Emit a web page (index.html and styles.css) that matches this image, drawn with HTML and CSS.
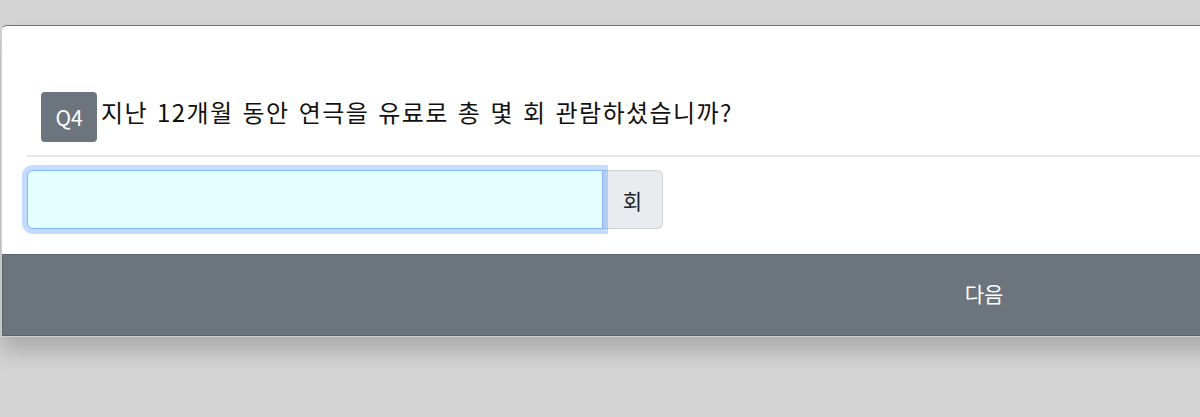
FILE: index.html
```html
<!DOCTYPE html>
<html lang="ko">
<head>
  <meta charset="UTF-8">
  <meta name="viewport" content="width=device-width, initial-scale=1.0">
  <title>설문</title>
  <link rel="stylesheet" href="styles.css">
</head>
<body>

  <div class="page">
    <div class="survey-card">
      <div class="card-body">
        <div class="question">
          <span class="q-badge">Q4</span>
          <span class="q-text">지난 12개월 동안 연극을 유료로 총 몇 회 관람하셨습니까?</span>
        </div>
        <hr class="divider">
        <div class="input-group">
          <input type="text" class="answer-input" id="answer">
          <span class="input-unit">회</span>
        </div>
      </div>
      <button class="next-btn">다음</button>
    </div>
  </div>

</body>
</html>
```

FILE: styles.css
```css
body {
  font-family: "Noto Sans CJK KR", "Noto Sans", sans-serif;
  background-color: #d4d4d4;
  margin: 0;
  padding: 0;
}
.page {
  overflow: hidden;
  padding: 25px 0 80px 1px;
}
.survey-card {
  width: 1964px;
  background-color: white;
  border: 1px solid #d0d0d0;
  border-top: 1px solid #6c757d;
  border-radius: 6px 0 0 0;
  box-shadow: 0 14px 22px rgba(0, 0, 0, 0.2);
}
.card-body {
  padding: 66px 0 25px 25px;
}
.question {
  display: flex;
  align-items: center;
  padding-left: 14px;
  gap: 4px;
}
.q-badge {
  display: inline-flex;
  align-items: center;
  justify-content: center;
  width: 56px;
  height: 50px;
  background-color: #6c757d;
  color: white;
  border-radius: 4px;
  font-size: 21px;
}
.q-text {
  color: #111;
  font-size: 24px;
  line-height: 1.2;
  padding-bottom: 10px;
  letter-spacing: 1.4px;
  word-spacing: 1px;
}
.divider {
  border: none;
  border-top: 2px solid #e3e6e9;
  margin: 13px 0 13px 0;
}
.input-group {
  display: flex;
}
.answer-input {
  position: relative;
  z-index: 1;
  width: 576px;
  height: 59px;
  box-sizing: border-box;
  background-color: #e3ffff;
  border: 1px solid #86b7fe;
  border-radius: 6px 0 0 6px;
  box-shadow: 0 0 0 5px rgba(13, 110, 253, 0.25);
  outline: none;
  font-size: 20px;
}
.input-unit {
  display: flex;
  align-items: center;
  justify-content: center;
  width: 60px;
  height: 59px;
  box-sizing: border-box;
  background-color: #e9ecef;
  border: 1px solid #ced4da;
  border-left: none;
  border-radius: 0 6px 6px 0;
  font-size: 21px;
  color: #212529;
}
.next-btn {
  display: block;
  width: 100%;
  height: 82px;
  background-color: #6c757d;
  border: 1px solid #5c636a;
  color: white;
  font-family: inherit;
  font-size: 21px;
  padding: 0 0 5px 0;
}
```
